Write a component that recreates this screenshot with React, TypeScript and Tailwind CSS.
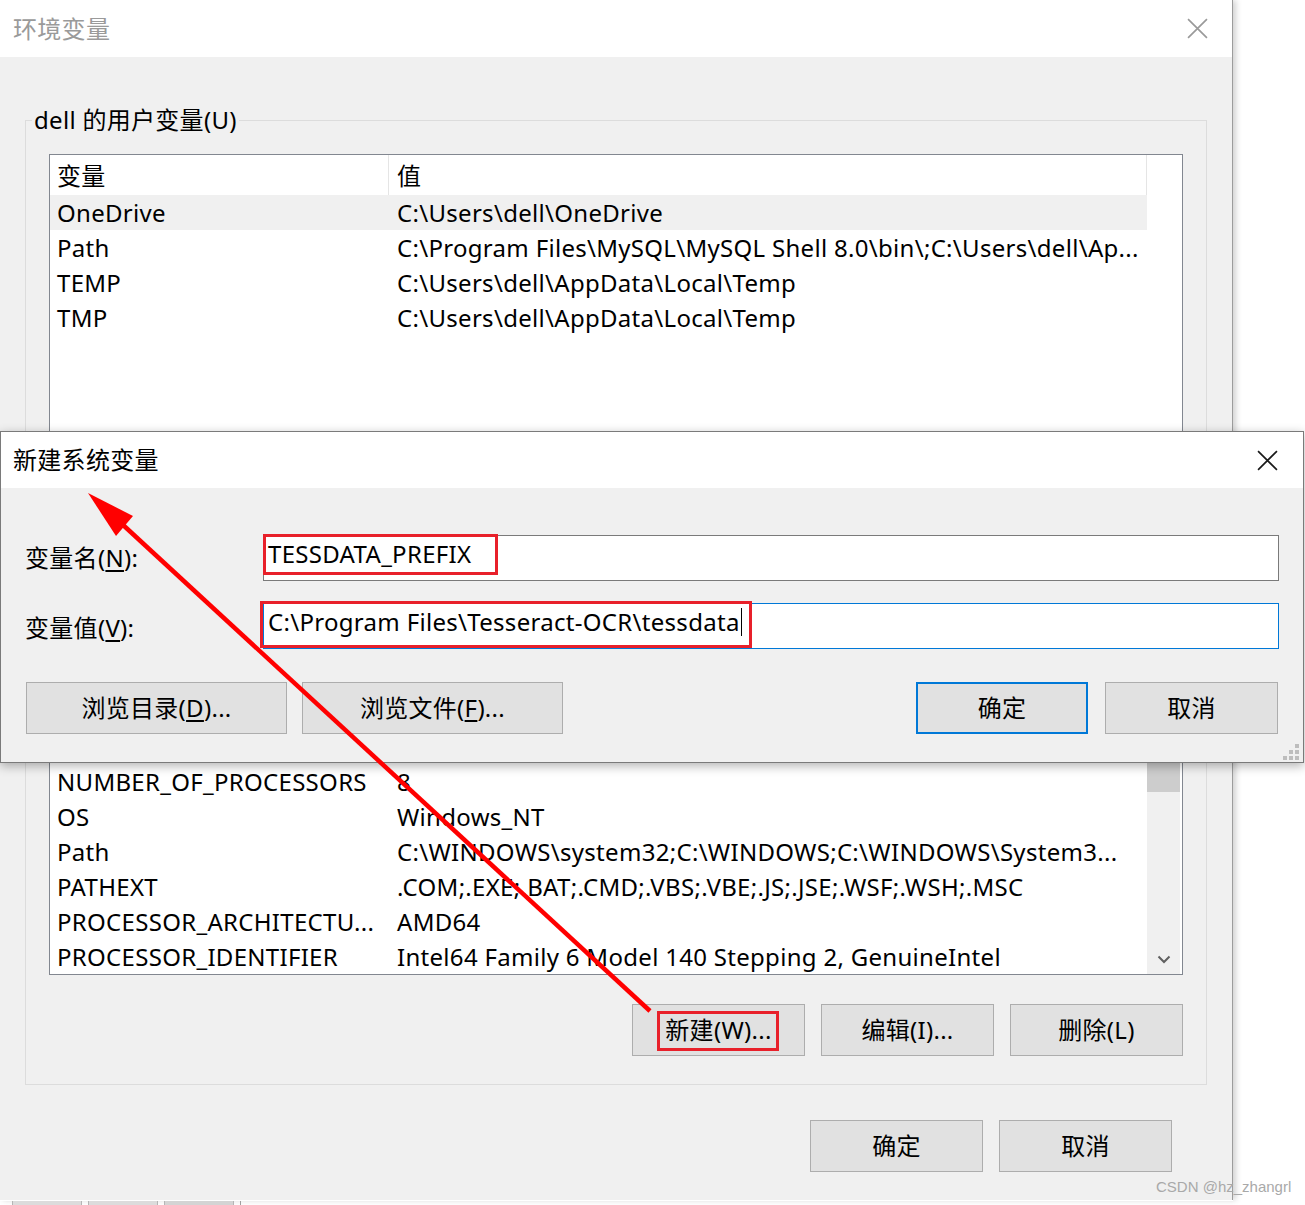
import React from "react";

const USER_VARS: [string, string][] = [
  ["OneDrive", "C:\\Users\\dell\\OneDrive"],
  ["Path", "C:\\Program Files\\MySQL\\MySQL Shell 8.0\\bin\\;C:\\Users\\dell\\Ap..."],
  ["TEMP", "C:\\Users\\dell\\AppData\\Local\\Temp"],
  ["TMP", "C:\\Users\\dell\\AppData\\Local\\Temp"],
];

// only the last six rows show below the dialog
const SYS_VARS: [string, string][] = [
  ["ComSpec", "C:\\WINDOWS\\cmd.exe"],
  ["CLASSPATH", ".;%JAVA_HOME%\\lib"],
  ["MAVEN_HOME", "D:\\Maven\\bin"],
  ["NUMBER_OF_PROCESSORS", "8"],
  ["OS", "Windows_NT"],
  ["Path", "C:\\WINDOWS\\system32;C:\\WINDOWS;C:\\WINDOWS\\System3..."],
  ["PATHEXT", ".COM;.EXE;.BAT;.CMD;.VBS;.VBE;.JS;.JSE;.WSF;.WSH;.MSC"],
  ["PROCESSOR_ARCHITECTU...", "AMD64"],
  ["PROCESSOR_IDENTIFIER", "Intel64 Family 6 Model 140 Stepping 2, GenuineIntel"],
];

function Row({ name, value, selected }: { name: string; value: string; selected?: boolean }) {
  return (
    <div className={`flex h-[35px] shrink-0 items-center whitespace-nowrap ${selected ? "bg-[#f0f0f0]" : ""}`}>
      <div className="w-[339px] shrink-0 pl-[7px]">{name}</div>
      <div className="pl-[8px]">{value}</div>
    </div>
  );
}

function Btn({
  children,
  className = "",
  focused,
}: {
  children: React.ReactNode;
  className?: string;
  focused?: boolean;
}) {
  return (
    <div
      className={`relative flex h-[52px] items-center justify-center bg-[#e1e1e1] text-black ${
        focused ? "border-2 border-[#0078d7]" : "border border-[#adadad]"
      } ${className}`}
    >
      {children}
    </div>
  );
}

function CloseX({ color, size }: { color: string; size: number }) {
  return (
    <svg width={size} height={size} viewBox="0 0 20 20">
      <path d="M1 1 L19 19 M19 1 L1 19" stroke={color} strokeWidth="1.6" fill="none" />
    </svg>
  );
}

export default function App() {
  return (
    <div className="relative h-[1205px] w-[1305px] overflow-hidden bg-white text-[24px] tracking-[0.3px] text-black font-['Noto_Sans','Noto_Sans_CJK_SC',sans-serif]">
      {/* 环境变量 window */}
      <div className="flex h-[1200px] w-[1233px] flex-col border-r border-[#9c9c9c] bg-[#f0f0f0] shadow-[3px_0_6px_rgba(0,0,0,0.18)]">
        <div className="flex h-[57px] shrink-0 items-center justify-between bg-white pl-[13px] pr-[24px]">
          <span className="text-[#9a9a9a]">环境变量</span>
          <CloseX color="#9a9a9a" size={21} />
        </div>

        <div className="flex flex-col px-[25px]">
          {/* 用户变量 */}
          <fieldset className="mt-[47px] border border-[#dcdcdc] p-0">
            <legend className="ml-[6px] px-[2px] leading-[32px]">dell 的用户变量(U)</legend>
            <div className="mx-[23px] mt-[18px] mb-[20px] h-[330px] border border-[#828790] bg-white">
              <div className="flex h-[40px] items-center">
                <div className="flex h-full w-[339px] items-center border-r border-[#e5e5e5] pl-[7px] pt-[2px]">变量</div>
                <div className="flex h-full w-[758px] items-center border-r border-[#e5e5e5] pl-[8px] pt-[2px]">值</div>
              </div>
              <div className="w-[1097px]">
                {USER_VARS.map(([n, v], i) => (
                  <Row key={n} name={n} value={v} selected={i === 0} />
                ))}
              </div>
            </div>
          </fieldset>

          {/* 系统变量 */}
          <fieldset className="mt-[10px] border border-[#dcdcdc] p-0">
            <legend className="ml-[6px] px-[2px] leading-[32px]">系统变量(S)</legend>
            <div className="mx-[23px] mt-[18px] flex h-[410px] border border-[#828790] bg-white">
              <div className="flex w-[1097px] flex-col justify-end overflow-hidden">
                {SYS_VARS.map(([n, v]) => (
                  <Row key={n} name={n} value={v} />
                ))}
              </div>
              <div className="flex w-[33px] flex-col justify-between bg-[#f0f0f0]">
                <div className="mt-[150px] h-[76px] bg-[#cdcdcd]" />
                <div className="flex justify-center pb-[10px]">
                  <svg width="14" height="9" viewBox="0 0 14 9">
                    <path d="M1.5 1.5 L7 7 L12.5 1.5" stroke="#606060" strokeWidth="2" fill="none" />
                  </svg>
                </div>
              </div>
            </div>
            <div className="mx-[23px] mt-[29px] mb-[28px] flex justify-end gap-[16px]">
              <Btn className="w-[173px]">
                新建(W)...
                <div className="absolute left-[24px] top-[6px] h-[40px] w-[122px] border-[3px] border-[#e8202a]" />
              </Btn>
              <Btn className="w-[173px]">编辑(I)...</Btn>
              <Btn className="w-[173px]">删除(L)</Btn>
            </div>
          </fieldset>

          <div className="mt-[35px] flex justify-end gap-[16px] pr-[35px]">
            <Btn className="w-[173px]">确定</Btn>
            <Btn className="w-[173px]">取消</Btn>
          </div>
        </div>
      </div>

      {/* strip of whatever lies beneath */}
      <div className="flex h-[5px] w-[1233px] items-stretch gap-[6px] border-t border-white pl-[12px]">
        <div className="w-[70px] border-x border-[#b5b5b5] bg-[#dcdcdc]" />
        <div className="w-[70px] border-x border-[#b5b5b5] bg-[#dcdcdc]" />
        <div className="w-[70px] border-x border-[#b5b5b5] bg-[#d4d4d4]" />
        <div className="w-px bg-[#a0a0a0]" />
      </div>

      {/* 新建系统变量 dialog */}
      <div className="absolute left-0 top-[431px] w-[1304px] border border-[#7a7a7a] bg-[#f0f0f0] shadow-[0_3px_10px_rgba(0,0,0,0.3)]">
        <div className="flex h-[56px] items-center justify-between bg-white pl-[12px] pr-[25px]">
          <span>新建系统变量</span>
          <CloseX color="#1a1a1a" size={21} />
        </div>
        <div className="relative px-[24px] pb-[28px] pt-[47px]">
          <div className="flex items-center">
            <div className="w-[238px] shrink-0">
              变量名(<span className="underline underline-offset-[3px]">N</span>):
            </div>
            <div className="relative flex h-[46px] flex-1 items-center border border-[#7a7a7a] bg-white pb-[8px] pl-[4px]">
              TESSDATA_PREFIX
              <div className="absolute -left-[1px] -top-[2px] h-[41px] w-[235px] border-[3px] border-[#e8202a]" />
            </div>
          </div>
          <div className="mt-[22px] flex items-center">
            <div className="w-[238px] shrink-0 pt-[3px]">
              变量值(<span className="underline underline-offset-[3px]">V</span>):
            </div>
            <div className="relative flex h-[46px] flex-1 items-center border border-[#0078d7] bg-white pb-[8px] pl-[4px]">
              C:\Program Files\Tesseract-OCR\tessdata
              <span className="ml-[1px] inline-block h-[28px] w-px bg-black" />
              <div className="absolute -left-[4px] -top-[3px] h-[47px] w-[492px] border-[3px] border-[#e8202a]" />
            </div>
          </div>
          <div className="mt-[33px] flex items-center justify-between pl-[1px] pr-[1px]">
            <div className="flex gap-[15px]">
              <Btn className="w-[261px]">
                浏览目录(<span className="underline underline-offset-[3px]">D</span>)...
              </Btn>
              <Btn className="w-[261px]">
                浏览文件(<span className="underline underline-offset-[3px]">F</span>)...
              </Btn>
            </div>
            <div className="flex gap-[17px]">
              <Btn className="w-[172px]" focused>
                确定
              </Btn>
              <Btn className="w-[173px]">取消</Btn>
            </div>
          </div>
          <svg className="absolute bottom-[1px] right-[3px]" width="17" height="17" viewBox="0 0 17 17">
            <rect x="12" y="0" width="4" height="4" fill="#bdbdbd" />
            <rect x="6" y="6" width="4" height="4" fill="#bdbdbd" />
            <rect x="12" y="6" width="4" height="4" fill="#bdbdbd" />
            <rect x="0" y="12" width="4" height="4" fill="#bdbdbd" />
            <rect x="6" y="12" width="4" height="4" fill="#bdbdbd" />
            <rect x="12" y="12" width="4" height="4" fill="#bdbdbd" />
          </svg>
        </div>
      </div>

      {/* red annotation arrow */}
      <svg className="pointer-events-none absolute left-0 top-0" width="1305" height="1205" viewBox="0 0 1305 1205">
        <line x1="650" y1="1011" x2="122" y2="524" stroke="#ff0000" strokeWidth="4.5" />
        <polygon points="88,493 133,516 116,536" fill="#ff0000" />
      </svg>

      <div className="absolute left-[1156px] top-[1177px] text-[15px] leading-[20px] tracking-normal text-[#a9a9a9] font-['Liberation_Sans',sans-serif]">
        CSDN @hz_zhangrl
      </div>
    </div>
  );
}
